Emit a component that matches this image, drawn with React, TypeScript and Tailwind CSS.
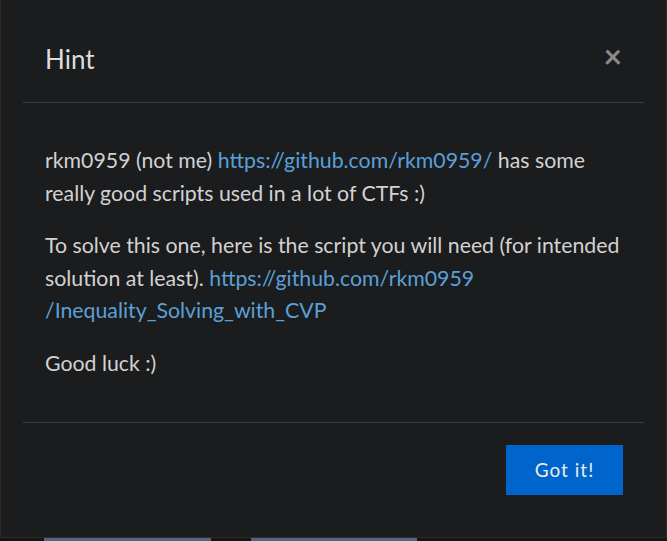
export default function App() {
  return (
    <div
      className="flex h-[541px] w-full flex-col overflow-hidden bg-[#151617]"
      style={{ fontFamily: "Lato, 'Noto Sans', sans-serif" }}
    >
      <div className="flex h-[538px] flex-col border-x border-b border-[#2e2b28] bg-[#1b1c1e] px-[22px]">
        <div className="flex h-[103px] items-center justify-between border-b border-[#3a3b3d] pl-[22px] pr-[22px] pt-[16px]">
          <h1 className="text-[26px] leading-none text-[#dcdcdc]">Hint</h1>
          <button className="pb-[6px] text-[32px] font-bold leading-none text-[#8a8a8a]">×</button>
        </div>

        <div className="px-[22px] pt-[41px] pb-[43px] text-[21.3px] leading-[32.5px] text-[#d2d2d2]">
          <p>
            rkm0959 (not me){" "}
            <a className="text-[#5aa0d8]" href="#">
              https://github.com/rkm0959/
            </a>{" "}
            has some really good scripts used in a lot of CTFs :)
          </p>
          <p className="mt-[20px]">
            To solve this one, here is the script you will need (for intended solution at least).{" "}
            <a className="text-[#5aa0d8]" href="#">
              https://github.com/rkm0959
              <br />
              /Inequality_Solving_with_CVP
            </a>
          </p>
          <p className="mt-[20px]">Good luck :)</p>
        </div>

        <div className="flex justify-end border-t border-[#3a3b3d] pt-[22px] pr-[21px]">
          <button className="h-[50px] w-[117px] bg-[#0064cd] text-[19px] tracking-[1px] text-[#ececec]">
            Got it!
          </button>
        </div>
      </div>

      <div className="flex h-[3px] gap-[40px] pl-[44px]">
        <div className="w-[167px] bg-[#4f6780]" />
        <div className="w-[166px] bg-[#4f6780]" />
      </div>
    </div>
  );
}
